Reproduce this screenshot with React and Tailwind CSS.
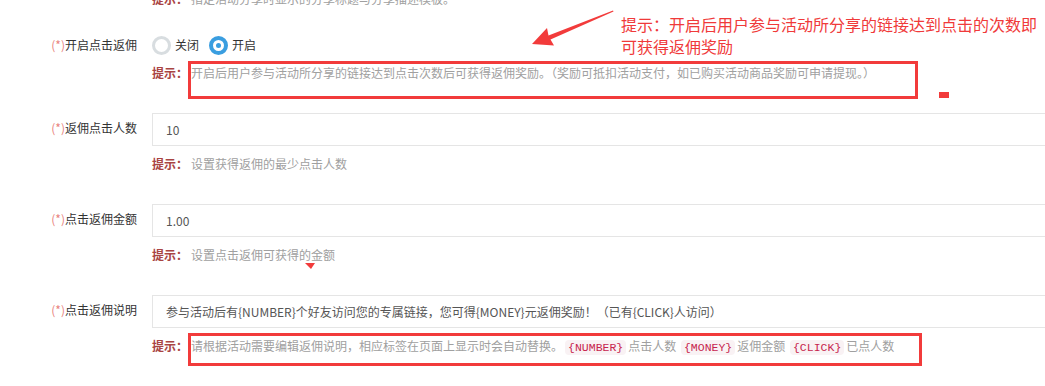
import React from "react";

const Label = ({ text, top = "pt-[6px]" }) => (
  <div className={`w-[137px] shrink-0 text-right text-[12px] leading-[18px] text-[#333] ${top}`}>
    <span className="text-[#e9837e]">(*)</span>
    {text}
  </div>
);

const Hint = ({ children, className = "mt-[9px]" }) => (
  <div className={`h-[18px] whitespace-nowrap text-[12px] leading-[18px] text-[#a0a0a0] ${className}`}>
    <span className="font-bold text-[#a94442]">提示：</span>
    <span className="ml-[3px]">{children}</span>
  </div>
);

const Tag = ({ children }) => (
  <code className="mx-[2px] rounded-[4px] bg-[#f9f2f4] px-[3px] py-[1px] text-[11.5px] text-[#c7254e] [font-family:'Liberation_Mono',monospace]">
    {children}
  </code>
);

const Field = ({ value }) => (
  <input
    readOnly
    value={value}
    className="block h-[33px] w-[1000px] border border-[#e5e5e5] bg-white px-[13px] text-[12px] text-[#555] outline-none"
  />
);

const Radio = ({ checked, label }) => (
  <label className="flex items-center">
    {checked ? (
      <span className="flex h-[19px] w-[19px] items-center justify-center rounded-full border-[4px] border-[#3a9ee0] bg-white">
        <span className="h-[5px] w-[5px] rounded-full bg-[#3a9ee0]" />
      </span>
    ) : (
      <span className="h-[19px] w-[19px] rounded-full border-[3px] border-[#d8dde0] bg-white" />
    )}
    <span className="ml-[4px] text-[12px] text-[#333]">{label}</span>
  </label>
);

export default function App() {
  return (
    <div className="relative h-[386px] w-[1045px] overflow-hidden bg-white [font-family:'Noto_Sans_CJK_SC','Noto_Sans',sans-serif]">
      <div className="flex flex-col">
        <div className="-mt-[10px] mb-[25px] flex">
          <div className="w-[137px] shrink-0" />
          <div className="ml-[15px]">
            <Hint className="">指定活动分享时显示的分享标题与分享描述模板。</Hint>
          </div>
        </div>

        <div className="mb-[31px] flex">
          <Label text="开启点击返佣" top="pt-[3px]" />
          <div className="ml-[15px] flex-1">
            <div className="flex h-[24px] items-center gap-[10px]">
              <Radio label="关闭" />
              <Radio checked label="开启" />
            </div>
            <Hint className="mt-[7px]">
              开启后用户参与活动所分享的链接达到点击次数后可获得返佣奖励。（奖励可抵扣活动支付，如已购买活动商品奖励可申请提现。）
            </Hint>
          </div>
        </div>

        <div className="mb-[31px] flex">
          <Label text="返佣点击人数" />
          <div className="ml-[15px] flex-1">
            <Field value="10" />
            <Hint>设置获得返佣的最少点击人数</Hint>
          </div>
        </div>

        <div className="mb-[31px] flex">
          <Label text="点击返佣金额" />
          <div className="ml-[15px] flex-1">
            <Field value="1.00" />
            <Hint>设置点击返佣可获得的金额</Hint>
          </div>
        </div>

        <div className="flex">
          <Label text="点击返佣说明" />
          <div className="ml-[15px] flex-1">
            <Field value="参与活动后有{NUMBER}个好友访问您的专属链接，您可得{MONEY}元返佣奖励！（已有{CLICK}人访问）" />
            <Hint>
              请根据活动需要编辑返佣说明，相应标签在页面上显示时会自动替换。
              <Tag>{"{NUMBER}"}</Tag>点击人数 <Tag>{"{MONEY}"}</Tag>返佣金额 <Tag>{"{CLICK}"}</Tag>已点人数
            </Hint>
          </div>
        </div>
      </div>

      {/* annotations drawn over the screenshot */}
      <div className="absolute left-[621px] top-[13px] whitespace-nowrap text-[16px] leading-[22px] text-[#f03a3a]">
        提示：开启后用户参与活动所分享的链接达到点击的次数即
        <br />
        可获得返佣奖励
      </div>
      <div className="absolute left-[188px] top-[61px] h-[38px] w-[730px] border-[3px] border-[#f23b3b]" />
      <div className="absolute left-[188px] top-[333px] h-[33px] w-[734px] border-[3px] border-[#f23b3b]" />
      <div className="absolute left-[939px] top-[92px] h-[6px] w-[10px] bg-[#f23b3b]" />
      <svg className="pointer-events-none absolute left-0 top-0" width="1045" height="386">
        <polygon
          points="532,44 547,28 548.5,35.5 613,10.5 613.5,11.5 550.5,39.5 554,45.5"
          fill="#f23b3b"
        />
        <polygon points="305,263 315,263 311,269" fill="#f23b3b" />
      </svg>
    </div>
  );
}
